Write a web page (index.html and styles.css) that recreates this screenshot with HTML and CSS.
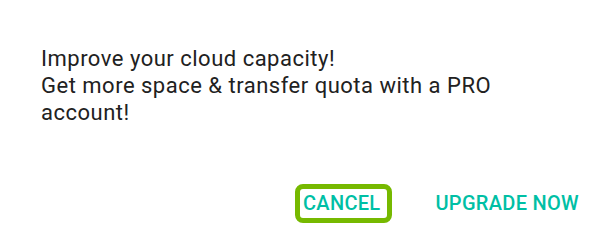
FILE: index.html
```html
<!DOCTYPE html>
<html lang="en">
<head>
    <meta charset="UTF-8">
    <meta name="viewport" content="width=device-width, initial-scale=1.0">
    <title>Upgrade</title>
    <link rel="stylesheet" href="styles.css">
</head>
<body>
    <div class="dialog">
        <p class="message">Improve your cloud capacity!<br>Get more space &amp; transfer quota with a PRO account!</p>
        <div class="actions">
            <button class="btn focused">CANCEL</button>
            <button class="btn">UPGRADE NOW</button>
        </div>
    </div>
</body>
</html>
```

FILE: styles.css
```css
body {
    margin: 0;
    background-color: #ffffff;
    font-family: Roboto, "Noto Sans", sans-serif;
}

.dialog {
    width: 600px;
    height: 239px;
    box-sizing: border-box;
    padding: 45px 9px 0 41px;
}

.message {
    margin: 0;
    max-width: 500px;
    font-size: 22px;
    letter-spacing: 0.5px;
    line-height: 27px;
    color: #212121;
}

.actions {
    display: flex;
    justify-content: flex-end;
    align-items: center;
    gap: 35px;
    margin-top: 58px;
}

.btn {
    border: 5px solid transparent;
    border-radius: 8px;
    background: none;
    padding: 0 7px 0 3px;
    height: 39px;
    font-family: Roboto, sans-serif;
    font-size: 20px;
    font-weight: 500;
    letter-spacing: 0.3px;
    line-height: 29px;
    color: #00bfa5;
    cursor: pointer;
}

/* anillo de foco del botón activo */
.btn.focused {
    border-color: #76b900;
}
```
